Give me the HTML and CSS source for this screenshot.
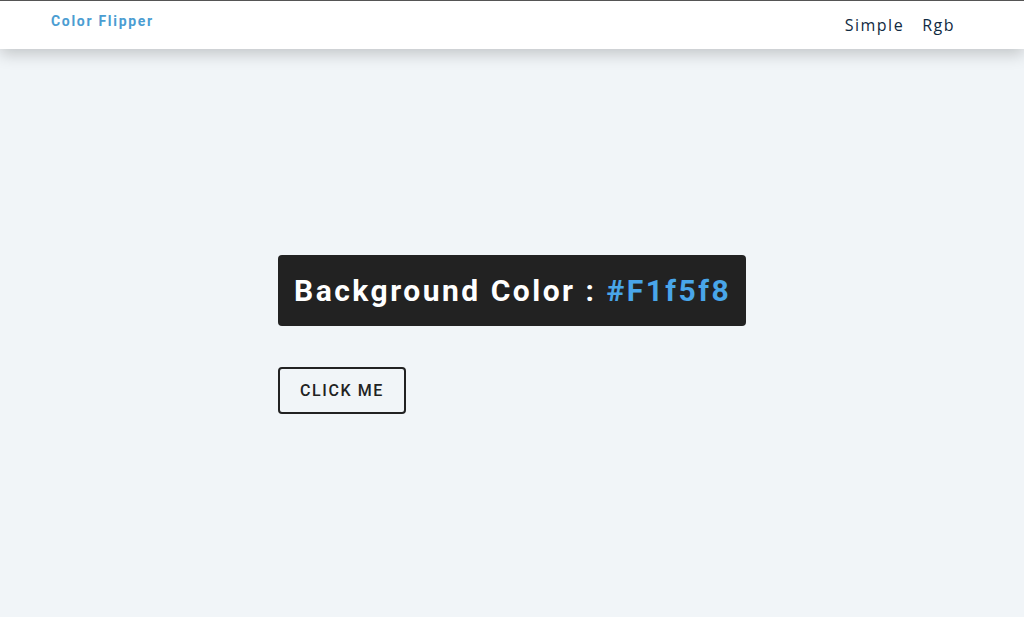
FILE: index.html
```html
<!DOCTYPE html>
<html lang="en">
<head>
<meta charset="utf-8">
<title>Color Flipper</title>
<link rel="stylesheet" href="styles.css">
</head>
<body>
<nav class="nav">
  <div class="nav-center">
    <h4 class="logo">Color Flipper</h4>
    <ul class="nav-links">
      <li><a href="#">Simple</a></li>
      <li><a href="#">Rgb</a></li>
    </ul>
  </div>
</nav>
<main class="main">
  <div class="container">
    <h2 class="heading">Background Color : <span class="color">#F1f5f8</span></h2>
    <button class="btn">click me</button>
  </div>
</main>
</body>
</html>
```
FILE: styles.css
```css
* { box-sizing: border-box; margin: 0; padding: 0; }
html, body { height: 100%; }
body {
  font-family: "Open Sans", sans-serif;
  background: #f1f5f8;
  color: #222;
  display: flex;
  flex-direction: column;
}
.nav {
  background: #fff;
  height: 49px;
  border-top: 1px solid #555;
  box-shadow: 0 5px 15px rgba(0, 0, 0, 0.2);
  position: relative;
  z-index: 1;
}
.nav-center {
  height: 100%;
  display: flex;
  align-items: center;
  justify-content: space-between;
  padding: 0 69px 0 51px;
}
.logo {
  font-family: Roboto, sans-serif;
  font-size: 14px;
  font-weight: 700;
  color: #4b9dd2;
  letter-spacing: 1.7px;
  align-self: flex-start;
  margin-top: 12px;
}
.nav-links {
  list-style: none;
  display: flex;
  gap: 18px;
}
.nav-links a {
  text-decoration: none;
  color: #102a42;
  font-size: 16px;
  font-weight: 500;
  letter-spacing: 1.5px;
}
.main {
  flex: 1;
  display: flex;
  align-items: center;
  justify-content: center;
}
.container {
  width: 468px;
  display: flex;
  flex-direction: column;
  align-items: flex-start;
  gap: 41px;
  margin-top: 2px;
}
.heading {
  background: #222;
  color: #fff;
  font-family: Roboto, sans-serif;
  font-size: 30px;
  font-weight: 700;
  letter-spacing: 2.5px;
  line-height: 37px;
  padding: 17px 16px;
  border-radius: 4px;
  width: 100%;
  white-space: nowrap;
}
.color { color: #49a6e9; }
.btn {
  font-family: Roboto, sans-serif;
  text-transform: uppercase;
  background: transparent;
  border: 2px solid #222;
  border-radius: 4px;
  color: #222;
  font-size: 16px;
  font-weight: 500;
  letter-spacing: 1.6px;
  width: 128px;
  height: 47px;
  cursor: pointer;
}
```
